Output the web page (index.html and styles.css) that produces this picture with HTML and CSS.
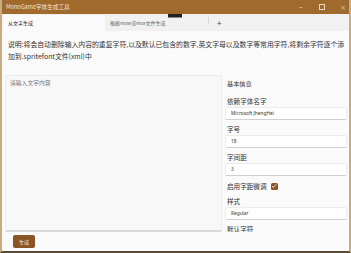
FILE: index.html
```html
<!DOCTYPE html>
<html lang="zh-CN">
<head>
    <meta charset="UTF-8">
    <title>MonoGame字体生成工具</title>
    <link rel="stylesheet" href="styles.css">
</head>
<body>
    <div class="window">
        <!-- Title bar -->
        <div class="title-bar">
            <span class="title">MonoGame字体生成工具</span>
            <div class="controls">
                <span class="ctl">&#8722;</span>
                <span class="ctl ctl-max"></span>
                <span class="ctl">&#215;</span>
            </div>
        </div>

        <!-- Tabs -->
        <div class="tab-strip">
            <div class="tab active">从文字生成</div>
            <div class="tab">根据resw或resx文件生成</div>
            <span class="tab-sep"></span>
            <span class="tab-add">+</span>
            <span class="drag-handle"></span>
        </div>

        <div class="content">
            <p class="desc">说明:将会自动删除输入内容的重复字符,以及默认已包含的数字,英文字母以及数字等常用字符,将剩余字符逐个添加到.spritefont文件(xml)中</p>

            <div class="main">
                <div class="text-input">请输入文字内容</div>

                <div class="panel">
                    <div class="panel-title">基本信息</div>
                    <div class="field">
                        <div class="label">依赖字体名字</div>
                        <div class="input">Microsoft JhengHei</div>
                    </div>
                    <div class="field">
                        <div class="label">字号</div>
                        <div class="input">18</div>
                    </div>
                    <div class="field">
                        <div class="label">字间距</div>
                        <div class="input">3</div>
                    </div>
                    <div class="check-row">
                        <span class="label">启用字距微调</span>
                        <span class="checkbox">
                            <svg width="6" height="6" viewBox="0 0 6 6"><path d="M1 3.2 L2.4 4.5 L5 1.5" fill="none" stroke="#fff" stroke-width="0.8"/></svg>
                        </span>
                    </div>
                    <div class="field">
                        <div class="label">样式</div>
                        <div class="input">Regular</div>
                    </div>
                    <div class="field">
                        <div class="label">默认字符</div>
                    </div>
                </div>
            </div>

            <div class="bottom-bar">
                <button class="btn">生成</button>
            </div>
        </div>
    </div>
</body>
</html>
```

FILE: styles.css
```css
body {
    margin: 0;
    padding: 0;
    background-color: #ffffff;
    font-family: "Noto Sans CJK SC", "Noto Sans", sans-serif;
}

.window {
    width: 351px;
    height: 253px;
    box-sizing: border-box;
    border-left: 2px solid #c7ab82;
    border-right: 2px solid #c7ab82;
    border-bottom: 2px solid #5a4a38;
    display: flex;
    flex-direction: column;
    background-color: #fafafa;
    overflow: hidden;
}

.title-bar {
    height: 14px;
    flex: none;
    background-color: #9f6a2c;
    display: flex;
    align-items: center;
    justify-content: space-between;
    margin: 0 -2px;
    padding: 0 4px 0 6px;
}

.title {
    font-size: 5.6px;
    color: #f3e6d6;
    line-height: 14px;
}

.controls {
    display: flex;
    align-items: center;
    gap: 12px;
}

.ctl {
    width: 8px;
    text-align: center;
    font-size: 7px;
    color: #e8d8c4;
    line-height: 14px;
}

.ctl-max {
    width: 4px;
    height: 4px;
    border: 1px solid #e8d8c4;
    margin: 0 2px;
}

/* Tabs */
.tab-strip {
    position: relative;
    height: 17px;
    flex: none;
    background-color: #f1f1f1;
    display: flex;
    align-items: flex-end;
    padding-left: 1px;
}

.tab {
    width: 102px;
    height: 16px;
    box-sizing: border-box;
    padding-left: 5px;
    font-size: 5px;
    line-height: 16px;
    color: #666;
}

.tab.active {
    background-color: #fafafa;
    color: #222;
    border-radius: 3px 3px 0 0;
}

.tab-sep {
    width: 1px;
    height: 7px;
    background-color: #d6d6d6;
    margin: 0 0 4px 1px;
    align-self: center;
}

.tab-add {
    font-size: 8px;
    line-height: 16px;
    color: #444;
    margin-left: 8px;
}

.drag-handle {
    position: absolute;
    left: 166px;
    top: 0;
    width: 14px;
    height: 3px;
    background-color: #222;
    border-bottom: 1px solid #888;
}

/* Content */
.content {
    flex: 1;
    display: flex;
    flex-direction: column;
    min-height: 0;
}

.desc {
    flex: none;
    margin: 0;
    padding: 7px 2px 0 6px;
    font-size: 6.85px;
    line-height: 12px;
    color: #333;
    box-sizing: border-box;
    height: 44px;
}

.main {
    height: 157px;
    flex: none;
    display: flex;
    gap: 3px;
    padding-left: 3px;
    padding-right: 2px;
}

.text-input {
    width: 217px;
    flex: none;
    box-sizing: border-box;
    border: 1px solid #ebebeb;
    border-bottom: 2px solid #d9d9d9;
    background-color: #f8f8f8;
    border-radius: 2px;
    padding: 3px 4px;
    font-size: 5.8px;
    line-height: 8px;
    color: #777;
}

.panel {
    flex: 1;
    overflow: hidden;
    padding-top: 3px;
}

.panel-title {
    font-size: 6.2px;
    line-height: 12px;
    color: #333;
    padding-left: 2px;
    margin-bottom: 6px;
}

.field {
    margin-bottom: 4px;
}

.label {
    font-size: 6.6px;
    line-height: 11px;
    color: #333;
    padding-left: 2px;
}

.input {
    height: 13px;
    box-sizing: border-box;
    background-color: #ffffff;
    border: 1px solid #ececec;
    border-bottom-color: #d0d0d0;
    border-radius: 2px;
    padding-left: 5px;
    font-family: "Noto Sans", sans-serif;
    font-size: 4.8px;
    line-height: 11px;
    color: #333;
}

.check-row {
    display: flex;
    align-items: center;
    gap: 4px;
    height: 12px;
    margin-bottom: 4px;
}

.checkbox {
    width: 7px;
    height: 7px;
    background-color: #8a5526;
    border-radius: 1.5px;
    display: flex;
    align-items: center;
    justify-content: center;
}

.bottom-bar {
    flex: 1;
    padding: 3px 0 0 11px;
}

.btn {
    display: block;
    width: 22px;
    height: 13px;
    padding: 0;
    border: none;
    border-radius: 2px;
    background-color: #8a5526;
    color: #f5e9dc;
    font-family: "Noto Sans CJK SC", sans-serif;
    font-size: 5px;
    line-height: 13px;
}
```
